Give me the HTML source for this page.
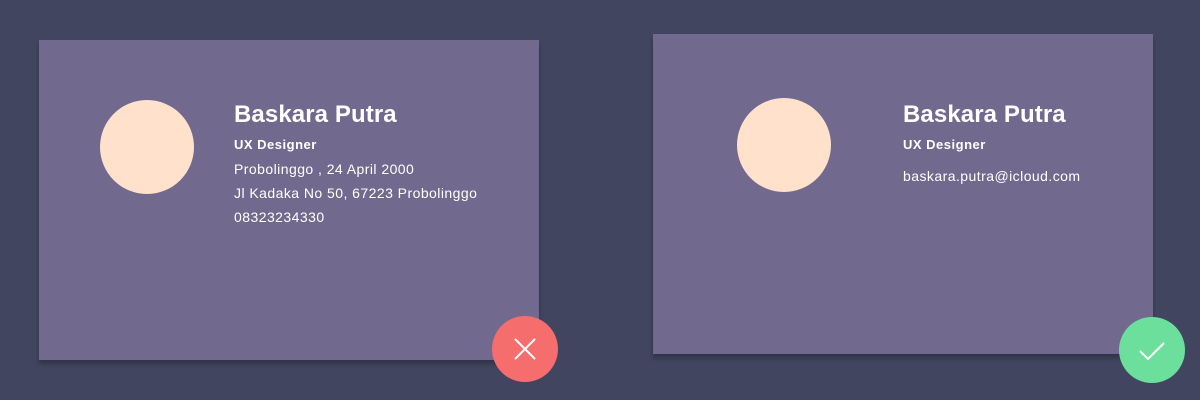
<!DOCTYPE html>
<html><head><style>
body{margin:0;width:1200px;height:400px;background:#41455f;position:relative;overflow:hidden;font-family:"Liberation Sans",sans-serif;color:#fff}
.card{position:absolute;width:500px;height:320px;background:#726a8e;box-shadow:0 4px 4px rgba(0,0,0,.25)}
.av{position:absolute;width:94px;height:94px;border-radius:50%;background:#ffe1cc}
.t{position:absolute;white-space:nowrap}
.n{font-size:24px;font-weight:bold;letter-spacing:.1px}
.r{font-size:13px;font-weight:bold;letter-spacing:.5px}
.l{font-size:14px;letter-spacing:.45px}
.b{position:absolute;width:66px;height:66px;border-radius:50%}
</style></head><body>
<div class="card" style="left:39px;top:40px"></div>
<div class="av" style="left:100px;top:100px"></div>
<div class="t n" style="left:234px;top:101px">Baskara Putra</div>
<div class="t r" style="left:234px;top:137px">UX Designer</div>
<div class="t l" style="left:234px;top:161px">Probolinggo , 24 April 2000</div>
<div class="t l" style="left:234px;top:185px">Jl Kadaka No 50, 67223 Probolinggo</div>
<div class="t l" style="left:234px;top:209px">08323234330</div>
<div class="card" style="left:653px;top:34px"></div>
<div class="av" style="left:737px;top:98px"></div>
<div class="t n" style="left:903px;top:101px">Baskara Putra</div>
<div class="t r" style="left:903px;top:137px">UX Designer</div>
<div class="t" style="left:903px;top:168px;font-size:14px;letter-spacing:.45px">baskara.putra@icloud.com</div>
<div class="b" style="left:492px;top:316px;background:#f56d6d"><svg width="66" height="66"><path d="M23 23L43 43M43 23L23 43" stroke="#fff" stroke-width="2" fill="none"/></svg></div>
<div class="b" style="left:1119px;top:317px;background:#6ddf9d"><svg width="66" height="66"><path d="M21 34L29 42L45 26" stroke="#fff" stroke-width="2" fill="none"/></svg></div>
</body></html>
